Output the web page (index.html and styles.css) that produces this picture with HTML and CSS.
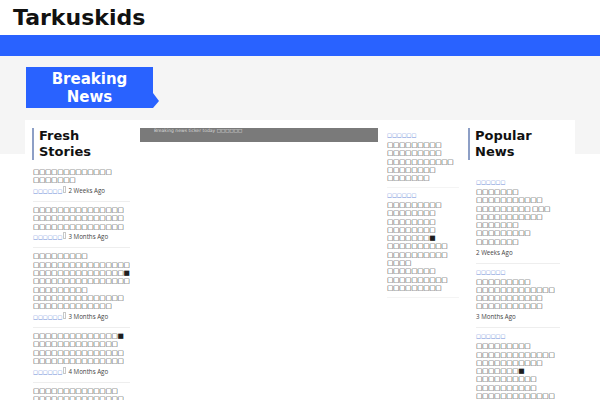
FILE: index.html
```html
<!DOCTYPE html>
<html lang="en">
<head>
<meta charset="utf-8">
<title>Tarkuskids</title>
<link rel="stylesheet" href="styles.css">
</head>
<body>
<header class="site-header">
  <div class="brand">Tarkuskids</div>
</header>
<nav class="nav-bar"></nav>
<section class="hero">
  <div class="breaking">Breaking News</div>
  <main class="board">
    <section class="col fresh">
      <h2 class="col-heading">Fresh Stories</h2>
      <article class="story">
        <p class="title">□□□□□□□□□□□□□ □□□□□□□</p>
        <div class="meta"><span class="cat">□□□□□□</span><span class="sep"></span><span class="date">2 Weeks Ago</span></div>
      </article>
      <article class="story">
        <p class="title">□□□□□□□□□□□□□□□ □□□□□□□□□□□□□□□ □□□□□□□□□□□□□□□</p>
        <div class="meta"><span class="cat">□□□□□□</span><span class="sep"></span><span class="date">3 Months Ago</span></div>
      </article>
      <article class="story">
        <p class="title">□□□□□□□□□ □□□□□□□□□□□□□□□□ □□□□□□□□□□□□□□□■ □□□□□□□□□□□□□□□□ □□□□□□□□□ □□□□□□□□□□□□□□□ □□□□□□□□□□□□□</p>
        <div class="meta"><span class="cat">□□□□□□</span><span class="sep"></span><span class="date">3 Months Ago</span></div>
      </article>
      <article class="story">
        <p class="title">□□□□□□□□□□□□□□■ □□□□□□□□□□□□□□ □□□□□□□□□□□□□□□ □□□□□□□□□□□□□□□</p>
        <div class="meta"><span class="cat">□□□□□□</span><span class="sep"></span><span class="date">4 Months Ago</span></div>
      </article>
      <article class="story">
        <p class="title">□□□□□□□□□□□□□□ □□□□□□□□□□□□□□□ □□□□□□□□□□□□ □□□□□□□□□□</p>
        <div class="meta"><span class="cat">□□□□□□</span><span class="sep"></span><span class="date">5 Months Ago</span></div>
      </article>
    </section>

    <section class="col center">
      <div class="ticker">Breaking news ticker today <span class="ticker-tail">□□□□□□</span></div>
    </section>

    <section class="col briefs">
      <article class="brief">
        <div class="cat-line">□□□□□□</div>
        <p class="title">□□□□□□□□□ □□□□□□□□□ □□□□□□□□□□□ □□□□□□□□ □□□□□□□</p>
      </article>
      <article class="brief">
        <div class="cat-line">□□□□□□</div>
        <p class="title">□□□□□□□□□ □□□□□□□□ □□□□□□□□ □□□□□□□□ □□□□□□□■ □□□□□□□□□□ □□□□□□□□□□ □□□□ □□□□□□□□ □□□□□□□□□□ □□□□□□□□□</p>
      </article>
    </section>

    <section class="col popular">
      <h2 class="col-heading">Popular News</h2>
      <div class="popular-list">
        <article class="pop">
          <div class="cat-line">□□□□□□</div>
          <p class="title">□□□□□□□ □□□□□□□□□□□ □□□□□□□□□ □□□ □□□□□□□□□□□ □□□□□□□ □□□□□□□□□ □□□□□□□</p>
          <div class="pop-date">2 Weeks Ago</div>
        </article>
        <article class="pop">
          <div class="cat-line">□□□□□□</div>
          <p class="title">□□□□□□□□□ □□□□□□□□□□□□□ □□□□□□□□□□□ □□□□□□□□□□□</p>
          <div class="pop-date">3 Months Ago</div>
        </article>
        <article class="pop">
          <div class="cat-line">□□□□□□</div>
          <p class="title">□□□□□□□□□ □□□□□□□□□□□□□ □□□□□□□□□□□ □□□□□□□■ □□□□□□□□□□ □□□□□□□□□□ □□□□□□□□□□□□□</p>
          <div class="pop-date">4 Months Ago</div>
        </article>
      </div>
    </section>
  </main>
</section>
</body>
</html>
```
FILE: styles.css
```css
body {
  margin: 0;
  font-family: "DejaVu Sans", sans-serif;
  color: #222;
  background: #fff;
}

.site-header {
  height: 35px;
  padding-left: 13px;
}

.brand {
  font-size: 22px;
  font-weight: bold;
  line-height: 35px;
  color: #111;
}

.nav-bar {
  height: 21px;
  background: #2962ff;
}

.hero {
  padding: 11px 25px 0;
  background: linear-gradient(#f5f5f5, #f5f5f5) top left / 100% 98px no-repeat;
}

.breaking {
  position: relative;
  box-sizing: border-box;
  width: 127px;
  height: 41px;
  margin-left: 1px;
  padding: 3px 20px 0;
  background: #2962ff;
  color: #fff;
  font-size: 15px;
  font-weight: bold;
  line-height: 18px;
  text-align: center;
}

.breaking::after {
  content: "";
  position: absolute;
  right: -6px;
  bottom: 0;
  border-left: 6px solid #2962ff;
  border-top: 8px solid transparent;
  border-bottom: 7px solid transparent;
}

.board {
  box-sizing: border-box;
  width: 550px;
  margin-top: 12px;
  padding: 8px 7px;
  background: #fff;
  display: grid;
  grid-template-columns: 99px 238px 72px 100px;
  column-gap: 9px;
  align-items: start;
}

.col-heading {
  margin: 0 0 4px;
  padding-left: 5px;
  border-left: 2px solid #8d9fc6;
  font-size: 13px;
  line-height: 16px;
  font-weight: bold;
  color: #111;
}

.title {
  margin: 0 0 1.5px;
  font-size: 6.8px;
  letter-spacing: -0.39px;
  line-height: 8.3px;
  color: #1e1e1e;
}

.story {
  width: 97px;
  margin-left: 1px;
  padding: 4px 0 5px;
  border-bottom: 1px solid #eee;
}

.meta {
  height: 10px;
  font-size: 5.2px;
  line-height: 10px;
  white-space: nowrap;
}

.cat,
.cat-line {
  color: #6a8bd8;
  font-size: 5.2px;
}

.cat-line {
  line-height: 9px;
  margin-bottom: 1px;
}

.sep {
  display: inline-block;
  width: 1px;
  height: 5px;
  margin-left: 1px;
  border: 1px solid #c8c8c8;
}

.date,
.pop-date {
  font-family: "Open Sans", "DejaVu Sans", sans-serif;
  font-size: 6.2px;
  color: #444;
}

.date {
  margin-left: 2px;
}

.pop-date {
  line-height: 10px;
  margin-top: 1px;
}

.ticker {
  height: 14px;
  padding-left: 14px;
  background: #7a7a7a;
  color: #d8d8d8;
  font-size: 4.5px;
  line-height: 5px;
  white-space: nowrap;
  overflow: hidden;
}

.ticker-tail {
  font-size: 4.5px;
  color: #eee;
}

.brief {
  padding: 3px 0;
  border-bottom: 1px solid #f4f4f4;
}

.popular-list {
  margin-left: 8px;
  padding-top: 10px;
}

.pop {
  width: 84px;
  padding: 4px 0 5px;
  border-bottom: 1px solid #eee;
}
```
